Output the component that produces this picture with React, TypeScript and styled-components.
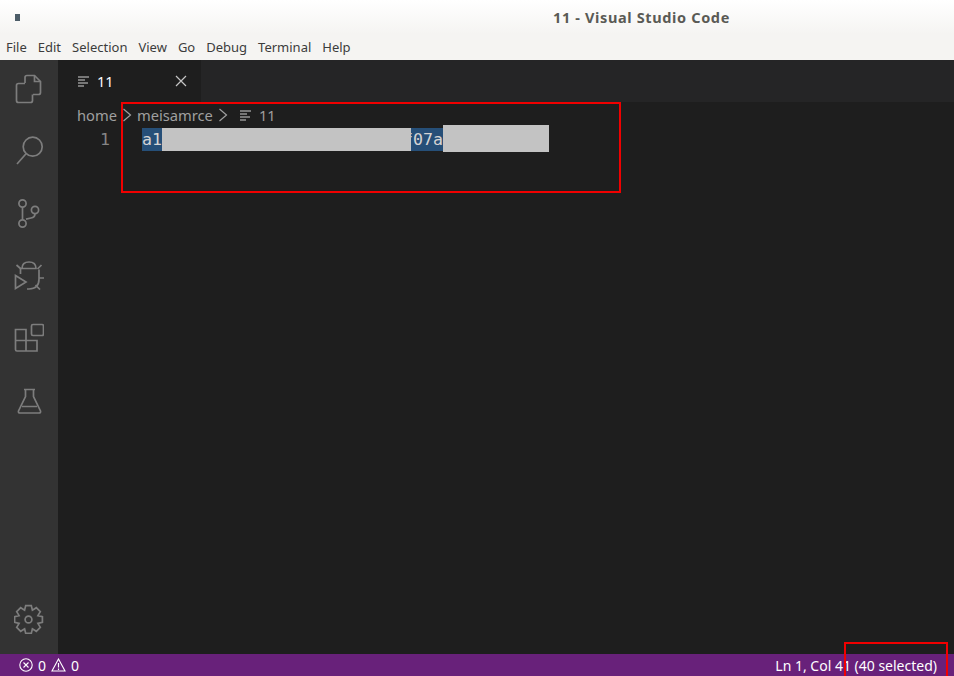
import styled, { createGlobalStyle } from "styled-components"

const GlobalStyle = createGlobalStyle`
html, body {
    margin: 0;
    padding: 0;
    height: 100%;
    overflow: hidden;
}
#root {
    height: 100%;
}
`

const menus = ["File", "Edit", "Selection", "View", "Go", "Debug", "Terminal", "Help"]

// 8 tooth gear outline, easier than writing the points by hand
const gearPath = () => {
    const cx = 14.5
    const cy = 15.5
    const pts: string[] = []
    for (let i = 0; i < 8; i++) {
        const a = (i * Math.PI) / 4 - Math.PI / 2
        const steps: [number, number][] = [
            [10.2, -0.39],
            [14.2, -0.2],
            [14.2, 0.2],
            [10.2, 0.39],
        ]
        steps.forEach(([r, d]) => {
            pts.push(`${(cx + r * Math.cos(a + d)).toFixed(1)} ${(cy + r * Math.sin(a + d)).toFixed(1)}`)
        })
    }
    return "M" + pts.join(" L") + " Z"
}

const LinesIcon = () => (
    <svg width="12" height="11" viewBox="0 0 12 11">
        <path d="M0 1H11M0 4H7M0 7H10M0 10H6" stroke="#d0d0d0" strokeWidth="1.2" fill="none" />
    </svg>
)

const Chevron = () => (
    <svg width="10" height="14" viewBox="0 0 10 14">
        <path d="M1.5 1L8.5 7L1.5 13" stroke="#a0a0a0" strokeWidth="1.2" fill="none" />
    </svg>
)

const App = () => {
    return (
        <Window>
            <GlobalStyle />
            <TitleBar>
                <AppGlyph />
                <WindowTitle>11 - Visual Studio Code</WindowTitle>
            </TitleBar>
            <MenuBar>
                {menus.map((m) => (
                    <MenuItem key={m}>{m}</MenuItem>
                ))}
            </MenuBar>
            <Body>
                <ActivityBar>
                    <ActivityItem>
                        <ActivityIcon>
                            <path d="M11 9V3.5Q11 1.5 13 1.5H20.5L26.5 7.5V18.5Q26.5 20.5 24.5 20.5H19" />
                            <path d="M20.5 1.5V7.5H26.5" />
                            <path d="M11 9.5H4.5Q2.5 9.5 2.5 11.5V26.5Q2.5 28.5 4.5 28.5H16.5Q18.5 28.5 18.5 26.5V20.5" />
                        </ActivityIcon>
                    </ActivityItem>
                    <ActivityItem>
                        <ActivityIcon>
                            <circle cx="18.7" cy="10.7" r="9.5" />
                            <path d="M11.8 18L3 28" />
                        </ActivityIcon>
                    </ActivityItem>
                    <ActivityItem>
                        <ActivityIcon>
                            <circle cx="8.5" cy="5.5" r="3.6" />
                            <circle cx="21" cy="12" r="3.6" />
                            <circle cx="8.5" cy="25.5" r="3.6" />
                            <path d="M8.5 9V22M21 15.6Q21 19.5 17 20L12 21.2" />
                        </ActivityIcon>
                    </ActivityItem>
                    <ActivityItem>
                        <ActivityIcon>
                            <path d="M1.5 15.5L12 22L1.5 28.5Z" />
                            <path d="M8 8.5Q8 2 15 2Q22 2 22 8.5H6.5" />
                            <path d="M6.5 8.5V14M25 9.5V19Q25 29 15 29H13" />
                            <path d="M2.5 5L7 9M27.5 5L23.5 9M25 18H30M21.5 25L26 29.5" />
                        </ActivityIcon>
                    </ActivityItem>
                    <ActivityItem>
                        <ActivityIcon>
                            <path d="M1.5 7.5H12V18.5H23V29H3Q1.5 29 1.5 27.5ZM1.5 18.5H12V29" />
                            <rect x="17.5" y="2.5" width="12" height="11" rx="1.5" />
                        </ActivityIcon>
                    </ActivityItem>
                    <ActivityItem>
                        <ActivityIcon>
                            <path d="M10 5.5H21M11.5 5.5V12.5L4.5 27Q4 29 6 29H25Q27 29 26.5 27L19.5 12.5V5.5M8 22.5H23" />
                        </ActivityIcon>
                    </ActivityItem>
                    <ActivitySpacer />
                    <GearItem>
                        <ActivityIcon>
                            <path d={gearPath()} />
                            <circle cx="14.5" cy="15.5" r="3.4" />
                        </ActivityIcon>
                    </GearItem>
                </ActivityBar>
                <EditorPart>
                    <TabStrip>
                        <Tab>
                            <LinesIcon />
                            <TabName>11</TabName>
                            <TabClose>
                                <svg width="12" height="12" viewBox="0 0 12 12">
                                    <path d="M1 1L11 11M11 1L1 11" stroke="#c5c5c5" strokeWidth="1.2" fill="none" />
                                </svg>
                            </TabClose>
                        </Tab>
                    </TabStrip>
                    <Breadcrumbs>
                        <Crumb>home</Crumb>
                        <Chevron />
                        <Crumb>meisamrce</Crumb>
                        <Chevron />
                        <CrumbFile>
                            <LinesIcon />
                            <span>11</span>
                        </CrumbFile>
                    </Breadcrumbs>
                    <CodeLine>
                        <LineNumber>1</LineNumber>
                        <Selected>a1</Selected>
                        <Redaction />
                        <Selected>f07a</Selected>
                        <BigRedaction />
                    </CodeLine>
                    <HighlightBox />
                </EditorPart>
            </Body>
            <StatusBar>
                <StatusGroup>
                    <svg width="14" height="14" viewBox="0 0 14 14">
                        <circle cx="7" cy="7" r="6.2" stroke="#fff" strokeWidth="1.1" fill="none" />
                        <path d="M4.5 4.5L9.5 9.5M9.5 4.5L4.5 9.5" stroke="#fff" strokeWidth="1.1" />
                    </svg>
                    <span>0</span>
                    <svg width="15" height="14" viewBox="0 0 15 14">
                        <path d="M7.5 1L14 13H1Z" stroke="#fff" strokeWidth="1.1" fill="none" />
                        <path d="M7.5 5V9.5M7.5 10.5V12" stroke="#fff" strokeWidth="1.2" />
                    </svg>
                    <span>0</span>
                </StatusGroup>
                <StatusText>Ln 1, Col 41 (40 selected)</StatusText>
            </StatusBar>
            <CornerBox />
        </Window>
    )
}

export default App

const Window = styled.div`
position: relative;
display: flex;
flex-direction: column;
width: 954px;
height: 676px;
overflow: hidden;
font-family: "Noto Sans", sans-serif;
`

const TitleBar = styled.div`
display: flex;
align-items: center;
height: 34px;
padding-left: 15px;
box-sizing: border-box;
background: linear-gradient(#ffffff, #f5f4f2);
`

const AppGlyph = styled.div`
width: 5px;
height: 7px;
background: #4d5d68;
`

const WindowTitle = styled.div`
margin-left: 533px;
font-weight: bold;
font-size: 14.5px;
letter-spacing: 0.64px;
color: #5a5a55;
`

const MenuBar = styled.div`
display: flex;
align-items: center;
height: 26px;
padding-left: 6px;
box-sizing: border-box;
background: #f5f4f2;
gap: 11px;
`

const MenuItem = styled.div`
font-size: 13px;
color: #3c3c3c;
`

const Body = styled.div`
display: flex;
flex: 1;
min-height: 0;
`

const ActivityBar = styled.div`
display: flex;
flex-direction: column;
width: 58px;
background: #333333;
`

const ActivityItem = styled.div`
display: flex;
justify-content: center;
height: 62px;
padding-top: 14px;
box-sizing: border-box;
`

const GearItem = styled(ActivityItem)`
height: 50px;
padding-top: 0;
`

const ActivitySpacer = styled.div`
flex: 1;
`

const ActivityIcon = styled.svg.attrs({ viewBox: "0 0 30 30" })`
width: 30px;
height: 30px;
fill: none;
stroke: #7d7d7d;
stroke-width: 1.7;
`

const EditorPart = styled.div`
position: relative;
display: flex;
flex-direction: column;
flex: 1;
background: #1e1e1e;
`

const TabStrip = styled.div`
display: flex;
height: 42px;
background: #252526;
`

const Tab = styled.div`
display: flex;
align-items: center;
width: 143px;
padding-left: 20px;
box-sizing: border-box;
background: #1e1e1e;
color: #ffffff;
font-size: 14.5px;
`

const TabName = styled.span`
margin-left: 7px;
`

const TabClose = styled.div`
display: flex;
margin-left: 61px;
`

const Breadcrumbs = styled.div`
display: flex;
align-items: center;
gap: 5px;
height: 26px;
padding-left: 19px;
box-sizing: border-box;
font-size: 14.7px;
color: #a0a0a0;
`

const Crumb = styled.span``

const CrumbFile = styled.span`
display: flex;
align-items: center;
gap: 7px;
margin-left: 7px;
font-size: 14.5px;
`

const CodeLine = styled.div`
display: flex;
align-items: flex-start;
height: 23px;
font-family: "DejaVu Sans Mono", monospace;
font-size: 16.6px;
line-height: 23px;
`

const LineNumber = styled.div`
width: 52px;
padding-right: 32px;
text-align: right;
color: #858585;
`

const Selected = styled.div`
background: #264f78;
color: #d4d4d4;
height: 23px;
`

const Redaction = styled.div`
position: relative;
z-index: 1;
width: 249px;
height: 23px;
margin-right: -8px;
background: #c3c3c3;
`

const BigRedaction = styled.div`
width: 106px;
height: 27px;
margin-top: -3px;
background: #c3c3c3;
`

const HighlightBox = styled.div`
position: absolute;
left: 63px;
top: 42px;
width: 500px;
height: 91px;
box-sizing: border-box;
border: 2px solid #f00000;
`

const StatusBar = styled.div`
display: flex;
align-items: center;
justify-content: space-between;
height: 22px;
padding: 0 17px 0 19px;
box-sizing: border-box;
background: #68217a;
color: #ffffff;
font-size: 14px;
`

const StatusGroup = styled.div`
display: flex;
align-items: center;
gap: 5px;
`

const StatusText = styled.div``

const CornerBox = styled.div`
position: absolute;
left: 844px;
top: 642px;
width: 104px;
height: 36px;
box-sizing: border-box;
border: 2px solid #f00000;
`
